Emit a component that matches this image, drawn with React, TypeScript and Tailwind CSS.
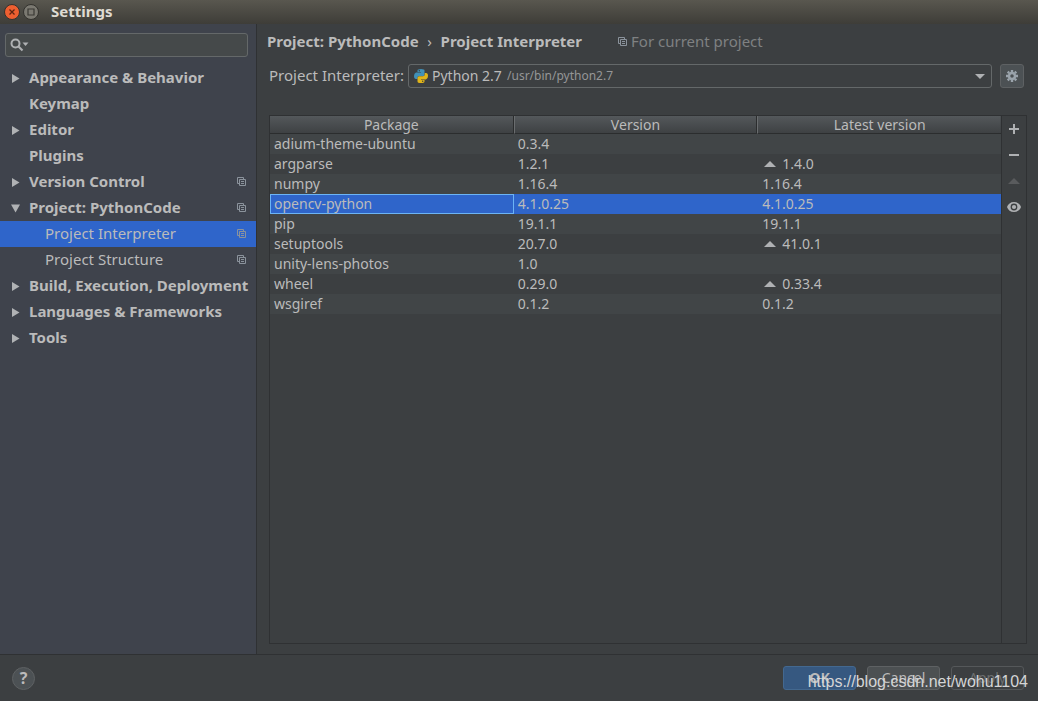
// Settings dialog · Project Interpreter page (dark theme)

import { useState } from 'react';

type TreeItem = {
  label: string;
  state?: 'open' | 'closed';
  child?: boolean;
  perProject?: boolean;
};

const TREE: TreeItem[] = [
  { label: 'Appearance & Behavior', state: 'closed' },
  { label: 'Keymap' },
  { label: 'Editor', state: 'closed' },
  { label: 'Plugins' },
  { label: 'Version Control', state: 'closed', perProject: true },
  { label: 'Project: PythonCode', state: 'open', perProject: true },
  { label: 'Project Interpreter', child: true, perProject: true },
  { label: 'Project Structure', child: true, perProject: true },
  { label: 'Build, Execution, Deployment', state: 'closed' },
  { label: 'Languages & Frameworks', state: 'closed' },
  { label: 'Tools', state: 'closed' },
];

const PACKAGES = [
  { name: 'adium-theme-ubuntu', version: '0.3.4', latest: '' },
  { name: 'argparse', version: '1.2.1', latest: '1.4.0', outdated: true },
  { name: 'numpy', version: '1.16.4', latest: '1.16.4' },
  { name: 'opencv-python', version: '4.1.0.25', latest: '4.1.0.25' },
  { name: 'pip', version: '19.1.1', latest: '19.1.1' },
  { name: 'setuptools', version: '20.7.0', latest: '41.0.1', outdated: true },
  { name: 'unity-lens-photos', version: '1.0', latest: '' },
  { name: 'wheel', version: '0.29.0', latest: '0.33.4', outdated: true },
  { name: 'wsgiref', version: '0.1.2', latest: '0.1.2' },
];

function CopyIcon() {
  return (
    <svg width="10" height="10" viewBox="0 0 10 10" fill="none" stroke="#8b939c" className="shrink-0">
      <path d="M2.5 6.5h-2v-6h6v2" />
      <path d="M2.5 2.5h6v6h-6z" />
      <path d="M4 4.5h3M4 6.5h3" />
    </svg>
  );
}

function TreeArrow({ state }: { state?: 'open' | 'closed' }) {
  return (
    <svg width="9" height="9" viewBox="0 0 9 9" fill="#b0b2b4" className="shrink-0">
      {state === 'closed' && <path d="M1 0v9l7.500-4.500z" />}
      {state === 'open' && <path d="M0 0.500h9l-4.500 8z" />}
    </svg>
  );
}

function UpArrow({ color }: { color: string }) {
  return (
    <svg width="12" height="6" viewBox="0 0 12 6" fill={color}>
      <path d="M0 6l6-6 6 6z" />
    </svg>
  );
}

function PythonIcon() {
  return (
    <svg width="14" height="14" viewBox="0 0 14 14" className="shrink-0">
      <path
        d="M3.500 1.500Q3.500 0 7 0t3.500 1.500V5.500Q10.500 7 9 7H5Q3.500 7 3.500 8.500V10H2Q0 10 0 7t2-3.500h5V3H3.500z"
        fill="#4191b8"
      />
      <path
        d="M10.500 12.500Q10.500 14 7 14t-3.500-1.500V8.700Q3.500 7.200 5 7.200H9Q10.700 7.200 10.700 5.500V4H12q2 0 2 3t-2 3.500H7V11h3.500z"
        fill="#dfb41a"
      />
      <circle cx="5.300" cy="1.700" r="0.700" fill="#3c3f41" />
      <circle cx="8.700" cy="12.300" r="0.700" fill="#3c3f41" />
    </svg>
  );
}

function GearIcon() {
  return (
    <svg width="12" height="12" viewBox="0 0 12 12" fill="none" stroke="#9aa3ab">
      <circle cx="6" cy="6" r="3" strokeWidth="2.500" />
      <path
        d="M6 0v2M6 10v2M0 6h2M10 6h2M1.700 1.700l1.500 1.500M8.800 8.800l1.500 1.500M10.300 1.700L8.800 3.200M3.200 8.800l-1.500 1.500"
        strokeWidth="2.400"
      />
    </svg>
  );
}

function TitleBar() {
  return (
    <header className="flex h-6 items-center bg-gradient-to-b from-[#59574f] to-[#3e3d38] pl-1">
      <button aria-label="Close" className="mr-[3px]">
        <svg width="16" height="16" viewBox="0 0 16 16" className="block">
          <circle cx="8" cy="8" r="7.500" fill="#ee5f30" stroke="#33322e" />
          <path d="M5.500 5.500l5 5M10.500 5.500l-5 5" stroke="#5e2411" strokeWidth="1.300" />
        </svg>
      </button>
      <button aria-label="Maximize" className="mr-3">
        <svg width="16" height="16" viewBox="0 0 16 16" className="block">
          <circle cx="8" cy="8" r="7.500" fill="#7b7971" stroke="#33322e" />
          <path d="M5 5h6v6H5z" fill="none" stroke="#3a3934" strokeWidth="1.200" />
        </svg>
      </button>
      <h1 className="text-[15px] font-bold text-[#dfdbd2]">Settings</h1>
    </header>
  );
}

function Sidebar({ selected, onSelect }: { selected: string; onSelect: (label: string) => void }) {
  return (
    <nav className="w-[257px] shrink-0 border-r border-[#2f3133] bg-[#3f434c] pt-[9px] text-[15px]">
      <label className="mr-2 mb-2 ml-[5px] flex h-6 items-center rounded-[3px] border border-[#646869] bg-[#45494a] pl-1">
        <svg width="19" height="14" viewBox="0 0 19 14" className="shrink-0">
          <circle cx="5.500" cy="5.500" r="4" fill="none" stroke="#afb1b3" strokeWidth="2" />
          <path d="M8.500 8.500l4 4" stroke="#afb1b3" strokeWidth="2.200" />
          <path d="M12.500 4.500h6l-3 3.500z" fill="#afb1b3" />
        </svg>
        <input aria-label="Search settings" className="min-w-0 flex-1 bg-transparent text-[#bbbbbb] outline-none" />
      </label>
      <ul>
        {TREE.map((item) => (
          <li key={item.label}>
            <button
              onClick={() => onSelect(item.label)}
              className={`flex h-[26px] w-full items-center pr-[9px] text-left whitespace-nowrap ${
                item.child ? 'pl-[45px]' : 'gap-[9px] pl-[11px] font-bold'
              } ${item.label === selected ? 'bg-[#2f65ca]' : ''}`}
            >
              {!item.child && <TreeArrow state={item.state} />}
              <span className="min-w-0 flex-1">{item.label}</span>
              {item.perProject && <CopyIcon />}
            </button>
          </li>
        ))}
      </ul>
    </nav>
  );
}

function PackageTable() {
  const [selected, setSelected] = useState('opencv-python');
  const th = 'border-b border-[#2b2d2e] p-0 font-normal';

  return (
    <div className="min-w-0 flex-1 border-r border-[#2f3133]">
      <table className="w-full table-fixed border-separate border-spacing-0 text-left">
        <thead>
          <tr className="h-[18px] bg-gradient-to-b from-[#54585b] to-[#3d4042] text-center leading-[17px]">
            <th className={`${th} border-r border-r-[#2b2d2e]`}>Package</th>
            <th className={`${th} border-x border-r-[#2b2d2e] border-l-[#6a6d6f]`}>Version</th>
            <th className={`${th} border-l border-l-[#6a6d6f]`}>Latest version</th>
          </tr>
        </thead>
        <tbody>
          {PACKAGES.map((p) => {
            const active = p.name === selected;
            return (
              <tr
                key={p.name}
                onClick={() => setSelected(p.name)}
                className={`h-5 leading-[18px] ${active ? 'bg-[#2f65ca]' : 'odd:bg-[#414547]'}`}
              >
                <td className={`border px-[3px] py-0 ${active ? 'border-[#6cb4f5]' : 'border-transparent'}`}>
                  {p.name}
                </td>
                <td className="px-1 py-0">{p.version}</td>
                <td className="px-[5px] py-0">
                  <span className="flex items-center gap-[6px]">
                    {p.outdated && (
                      <span className="pl-[2px]">
                        <UpArrow color="#afb1b3" />
                      </span>
                    )}
                    {p.latest}
                  </span>
                </td>
              </tr>
            );
          })}
        </tbody>
      </table>
    </div>
  );
}

function Toolbar() {
  const btn = 'flex h-[26px] w-6 items-center justify-center';
  return (
    <div className="flex w-6 flex-col">
      <button aria-label="Install" className={btn}>
        <svg width="10" height="10" viewBox="0 0 10 10" stroke="#afb1b3" strokeWidth="2">
          <path d="M5 0v10M0 5h10" />
        </svg>
      </button>
      <button aria-label="Uninstall" className={btn}>
        <svg width="10" height="10" viewBox="0 0 10 10" stroke="#afb1b3" strokeWidth="2">
          <path d="M0 5h10" />
        </svg>
      </button>
      <button aria-label="Upgrade" disabled className={btn}>
        <UpArrow color="#595b5d" />
      </button>
      <button aria-label="Show early releases" className={btn}>
        <svg width="14" height="10" viewBox="0 0 14 10">
          <path
            d="M7 0C3.500 0 1 2 0 5c1 3 3.500 5 7 5s6-2 7-5c-1-3-3.500-5-7-5zm0 1.600a3.400 3.400 0 1 1 0 6.800a3.400 3.400 0 1 1 0-6.800z"
            fill="#afb1b3"
            fillRule="evenodd"
          />
          <circle cx="7" cy="5" r="2.100" fill="#afb1b3" />
        </svg>
      </button>
    </div>
  );
}

function InterpreterPage() {
  return (
    <main className="flex min-w-0 flex-1 flex-col pr-[11px] pb-[10px] pl-3">
      <div className="mt-2 -ml-[2px] flex h-5 items-center text-[15px] font-bold whitespace-nowrap">
        <span>Project: PythonCode</span>
        <span className="w-[22px] text-center font-normal">›</span>
        <h2>Project Interpreter</h2>
        <span className="ml-9 flex items-center gap-[3px] font-normal text-[#7f8182]">
          <CopyIcon />
          For current project
        </span>
      </div>

      <div className="mt-3 mr-[3px] flex h-6 items-center">
        <label htmlFor="interpreter" className="w-[139px] shrink-0 text-[15px] whitespace-nowrap">
          Project Interpreter:
        </label>
        <div className="flex h-6 min-w-0 flex-1 items-center rounded-[3px] border border-[#646869] pr-[6px] pl-[5px]">
          <PythonIcon />
          <select id="interpreter" className="ml-1 appearance-none bg-transparent outline-none">
            <option>Python 2.7</option>
          </select>
          <span className="ml-[5px] text-xs text-[#959697]">/usr/bin/python2.7</span>
          <svg width="10" height="5" viewBox="0 0 10 5" fill="#afb1b3" className="ml-auto">
            <path d="M0 0h10L5 5z" />
          </svg>
        </div>
        <button
          aria-label="Interpreter options"
          className="ml-2 flex size-6 items-center justify-center rounded-[3px] border border-[#5e6163] bg-[#4c5154]"
        >
          <GearIcon />
        </button>
      </div>

      <div className="mt-[27px] flex flex-1 border border-[#2f3133]">
        <PackageTable />
        <Toolbar />
      </div>
    </main>
  );
}

function Footer() {
  const btn = 'h-6 w-[73px] rounded-[3px] border';
  return (
    <footer className="relative flex h-[47px] items-center border-t border-[#2f3133] pr-[14px] pl-3">
      <button
        aria-label="Help"
        className="flex size-[23px] items-center justify-center rounded-full border border-[#5e6163] bg-[#4c5154] text-base font-bold"
      >
        ?
      </button>
      <div className="ml-auto flex gap-[11px]">
        <button className={`${btn} border-[#43688f] bg-[#365880] font-bold`}>OK</button>
        <button className={`${btn} border-[#5e6163] bg-[#4c5052]`}>Cancel</button>
        <button disabled className={`${btn} border-[#55585a] text-[#6d6f70]`}>
          Apply
        </button>
      </div>
      <span className="pointer-events-none absolute right-[10px] bottom-[7px] font-['Liberation_Sans',sans-serif] text-base text-[#d4d5d6]">
        https://blog.csdn.net/wohu1104
      </span>
    </footer>
  );
}

export default function App() {
  const [page, setPage] = useState('Project Interpreter');

  return (
    <div className="flex min-h-screen flex-col bg-[#3c3f41] font-['Noto_Sans',sans-serif] text-sm text-[#bbbbbb]">
      <TitleBar />
      <div className="flex flex-1">
        <Sidebar selected={page} onSelect={setPage} />
        <InterpreterPage />
      </div>
      <Footer />
    </div>
  );
}
